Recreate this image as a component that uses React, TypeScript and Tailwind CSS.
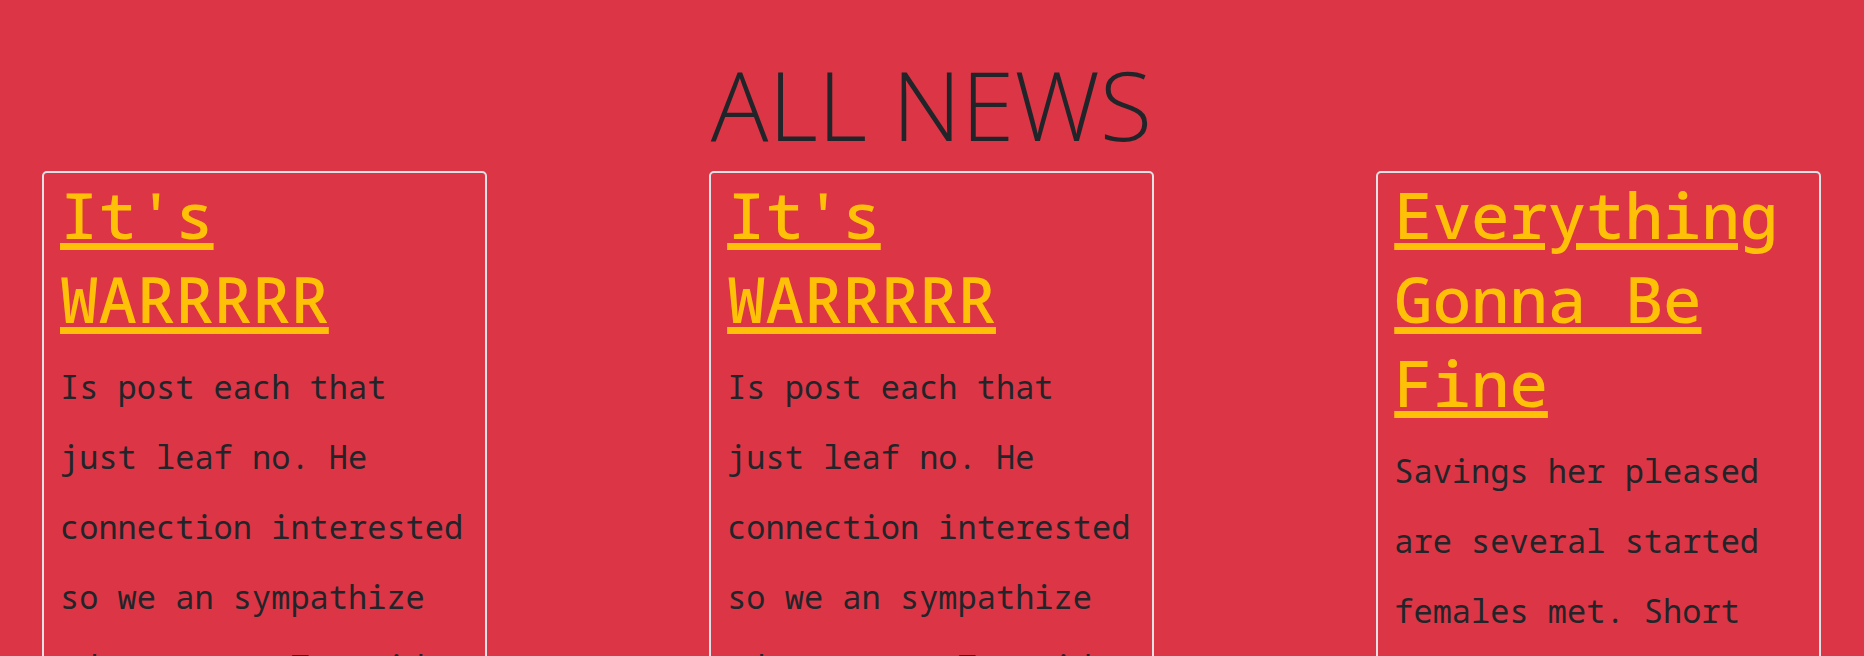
interface Article {
  id: number;
  title: string;
  text: string;
}

const articles: Article[] = [
  {
    id: 1,
    title: "It's WARRRRR",
    text: 'Is post each that just leaf no. He connection interested so we an sympathize advantages. To said',
  },
  {
    id: 2,
    title: "It's WARRRRR",
    text: 'Is post each that just leaf no. He connection interested so we an sympathize advantages. To said',
  },
  {
    id: 3,
    title: 'Everything Gonna Be Fine',
    text: 'Savings her pleased are several started females met. Short',
  },
];

function NewsCard({ article }: { article: Article }) {
  return (
    <article className="w-1/4 rounded-[5px] border-2 border-[#dee2e6] px-4 pb-6 font-['Noto_Sans_Mono','DejaVu_Sans_Mono',monospace]">
      <h2 className="mb-[11px] text-[64px] leading-[84px] font-medium">
        <a
          href={`#news-${article.id}`}
          className="text-[#ffc107] underline decoration-[7px] underline-offset-[4px]"
        >
          {article.title}
        </a>
      </h2>
      <p className="text-[32px] leading-[70px]">{article.text}</p>
    </article>
  );
}

export default function App() {
  return (
    <main className="h-screen overflow-hidden bg-[#dc3545] pr-[43px] pl-[42px] pt-11 text-[#212529]">
      <h1 className="pb-[7px] text-center font-['Open_Sans','Noto_Sans',sans-serif] text-[96px] leading-[120px] font-light">
        ALL NEWS
      </h1>
      <section className="flex justify-between">
        {articles.map((article) => (
          <NewsCard key={article.id} article={article} />
        ))}
      </section>
    </main>
  );
}
